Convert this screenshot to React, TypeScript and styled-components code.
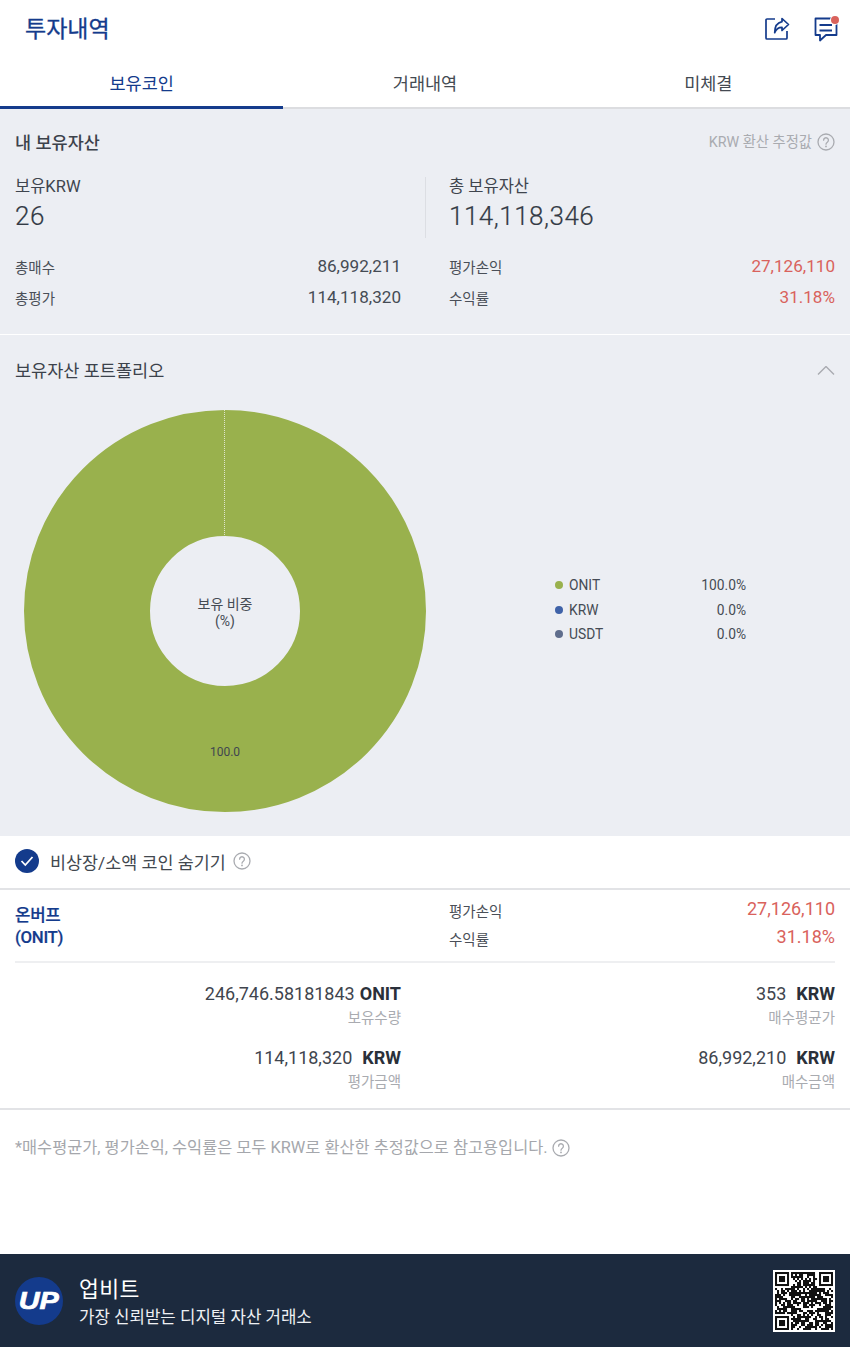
import React from 'react';
import styled, { createGlobalStyle } from 'styled-components';

const NAVY = '#143b8c';
const RED = '#d9625c';
const GRAY_BG = '#eceef3';
const TEXT = '#333a45';

const GlobalStyle = createGlobalStyle`
  html, body {
    margin: 0;
    padding: 0;
    background: #fff;
    font-family: Roboto, "Noto Sans CJK KR", sans-serif;
    color: ${TEXT};
  }
  * { box-sizing: border-box; }
`;

const Page = styled.div`
  width: 850px;
  height: 1347px;
  display: flex;
  flex-direction: column;
  background: #fff;
`;

const Header = styled.header`
  height: 60px;
  padding: 0 12px 2px 25px;
  display: flex;
  align-items: center;
  justify-content: space-between;
`;

const Title = styled.h1`
  margin: 2px 0 0;
  font-size: 23px;
  line-height: 30px;
  font-weight: 400;
  color: ${NAVY};
  -webkit-text-stroke: 0.3px ${NAVY};
`;

const HeaderIcons = styled.div`
  display: flex;
  align-items: center;
  gap: 25px;
`;

const IconWrap = styled.span`
  position: relative;
  display: block;
  width: 24px;
  height: 24px;
`;

const Dot = styled.span`
  position: absolute;
  top: -1px;
  left: 17px;
  width: 8px;
  height: 8px;
  border-radius: 50%;
  background: ${RED};
  box-shadow: 0 0 0 1px #fff;
`;

const Tabs = styled.nav`
  height: 49px;
  display: grid;
  grid-template-columns: repeat(3, 1fr);
  border-bottom: 2px solid #dcdde0;
`;

const Tab = styled.div<{ $active?: boolean }>`
  display: flex;
  align-items: center;
  justify-content: center;
  height: 49px;
  font-size: 17.5px;
  color: ${p => (p.$active ? NAVY : '#444a52')};
  border-bottom: ${p => (p.$active ? `3px solid ${NAVY}` : 'none')};
  padding-bottom: ${p => (p.$active ? '2px' : '5px')};
`;

const Summary = styled.section`
  height: 226px;
  padding: 22px 15px 0;
  background: ${GRAY_BG};
  border-bottom: 1px solid #fff;
`;

const SummaryHead = styled.div`
  display: flex;
  align-items: center;
  justify-content: space-between;
  height: 24px;
`;

const SectionTitle = styled.h2<{ $bold?: boolean }>`
  margin: 0;
  font-size: 17.5px;
  line-height: 24px;
  font-weight: ${p => (p.$bold ? 500 : 400)};
  color: #3c424b;
`;

const Estimate = styled.span`
  display: flex;
  align-items: center;
  gap: 5px;
  margin-bottom: 2px;
  font-size: 14.3px;
  line-height: 20px;
  color: #a9abb0;
`;

const TotalsGrid = styled.div`
  display: grid;
  grid-template-columns: 386px 386px;
  column-gap: 48px;
  margin-top: 22px;
`;

const TotalCell = styled.div<{ $divided?: boolean }>`
  position: relative;
  height: 61px;
  ${p =>
    p.$divided &&
    `&::before {
      content: '';
      position: absolute;
      left: -24px;
      top: 0;
      bottom: 0;
      width: 1px;
      background: #dcdee3;
    }`}
`;

const TotalLabel = styled.div`
  font-size: 16.5px;
  line-height: 20px;
  color: #3f454e;
`;

const TotalValue = styled.div`
  margin-top: 3px;
  font-size: 26px;
  line-height: 32px;
  letter-spacing: 0.5px;
  font-weight: 300;
  -webkit-text-stroke: 0.2px ${TEXT};
  color: ${TEXT};
`;

const StatList = styled.div`
  display: flex;
  flex-direction: column;
  gap: 7px;
  margin-top: 16px;
`;

const StatRow = styled.div`
  display: flex;
  align-items: center;
  justify-content: space-between;
  height: 24px;
`;

const StatLabel = styled.span`
  font-size: 14.5px;
  color: #4a4f58;
`;

const StatValue = styled.span<{ $up?: boolean }>`
  font-size: 17.1px;
  color: ${p => (p.$up ? RED : '#454b54')};
`;

const Portfolio = styled.section`
  height: 501px;
  padding: 24px 15px 0;
  background: ${GRAY_BG};
`;

const PortfolioHead = styled.div`
  display: flex;
  align-items: center;
  justify-content: space-between;
`;

const ChartRow = styled.div`
  display: flex;
  align-items: flex-start;
  margin-top: 26px;
  padding-left: 9px;
`;

const DonutSvg = styled.svg`
  display: block;
  flex: none;
`;

const Legend = styled.ul`
  list-style: none;
  margin: 164px 0 0 129px;
  padding: 0;
  width: 191px;
`;

const LegendItem = styled.li`
  display: flex;
  align-items: center;
  height: 24.5px;
  font-size: 13.8px;
  color: #454b54;
`;

const LegendDot = styled.span<{ $color: string }>`
  width: 8px;
  height: 8px;
  margin-right: 6px;
  border-radius: 50%;
  background: ${p => p.$color};
`;

const LegendValue = styled.span`
  margin-left: auto;
`;

const HideRow = styled.div`
  height: 54px;
  padding: 0 15px 2px;
  display: flex;
  align-items: center;
  border-bottom: 2px solid #e2e3e6;
  font-size: 17.4px;
  color: #42484f;
`;

const HideText = styled.span`
  margin: 0 7px 0 11px;
`;

const Check = styled.span`
  width: 24px;
  height: 24px;
  border-radius: 50%;
  background: ${NAVY};
  display: flex;
  align-items: center;
  justify-content: center;
`;

const CoinCard = styled.section`
  padding: 0 15px;
  height: 220px;
  border-bottom: 2px solid #e2e3e6;
`;

const CoinTop = styled.div`
  display: grid;
  grid-template-columns: 386px 386px;
  column-gap: 48px;
  height: 73px;
  border-bottom: 2px solid #eeeff1;
`;

const CoinName = styled.div`
  padding-top: 15px;
  font-size: 16.8px;
  line-height: 21.5px;
  font-weight: 500;
  letter-spacing: -0.3px;
  color: ${NAVY};
  -webkit-text-stroke: 0.2px ${NAVY};
`;

const CoinStats = styled.div`
  padding-top: 6px;
`;

const CoinStatRow = styled.div`
  display: flex;
  align-items: center;
  justify-content: space-between;
  height: 28px;
`;

const CoinStatValue = styled.span`
  font-size: 18px;
  margin-top: -4px;
  color: ${RED};
`;

const AmountGrid = styled.div`
  display: grid;
  grid-template-columns: 386px 386px;
  column-gap: 48px;
  row-gap: 15px;
  padding-top: 19px;
`;

const Amount = styled.div`
  text-align: right;
`;

const AmountValue = styled.div`
  font-size: 18px;
  line-height: 24px;
  color: #3f454e;
`;

const Unit = styled.b<{ $wide?: boolean }>`
  font-weight: 700;
  color: #2a303a;
  margin-left: ${p => (p.$wide ? '10px' : '5px')};
`;

const AmountLabel = styled.div`
  margin-top: 1px;
  font-size: 14.5px;
  line-height: 24px;
  color: #a9abb0;
`;

const Note = styled.p`
  margin: 26px 0 0;
  padding: 0 15px;
  display: flex;
  align-items: center;
  gap: 4px;
  font-size: 16.36px;
  line-height: 24px;
  color: #a5a7ac;
`;

const Footer = styled.footer`
  margin-top: auto;
  height: 93px;
  padding: 0 15px;
  display: flex;
  align-items: center;
  background: #1c2a3e;
  color: #fff;
`;

const Logo = styled.div`
  width: 48px;
  height: 48px;
  flex: none;
  border-radius: 50%;
  background: ${NAVY};
  display: flex;
  align-items: center;
  justify-content: center;
`;

const LogoText = styled.span`
  display: block;
  font: italic 700 24px/1 "Liberation Sans", sans-serif;
  color: #fff;
  -webkit-text-stroke: 0.7px #fff;
  transform: scaleX(1.2);
`;

const Brand = styled.div`
  margin-left: 16px;
  padding-top: 4px;
`;

const BrandName = styled.div`
  font-size: 21.6px;
  line-height: 30px;
  letter-spacing: 0.4px;
`;

const BrandSlogan = styled.div`
  font-size: 16.8px;
  line-height: 25px;
  color: #eef0f3;
`;

const QrBox = styled.div`
  margin-left: auto;
  width: 62px;
  height: 62px;
  flex: none;
  background: #fff;
  padding: 2px;
`;

function Help({ size = 18, color = '#a9abb0' }: { size?: number; color?: string }) {
  return (
    <svg width={size} height={size} viewBox="0 0 18 18" fill="none">
      <circle cx="9" cy="9" r="8" stroke={color} strokeWidth="1.3" />
      <path d="M6.6 7.2a2.4 2.4 0 1 1 3.7 2c-.9.6-1.3 1-1.3 2" stroke={color} strokeWidth="1.3" strokeLinecap="round" />
      <circle cx="9" cy="13.4" r=".9" fill={color} />
    </svg>
  );
}

function ShareIcon() {
  return (
    <svg width="24" height="24" viewBox="0 0 24 24" fill="none" stroke={NAVY} strokeWidth="1.7" style={{ display: 'block', overflow: 'visible' }}>
      <path d="M10 2H2a1 1 0 0 0-1 1v18a1 1 0 0 0 1 1h19a1 1 0 0 0 1-1v-7" />
      <path d="M17 1.5 23.5 7.5 17 13.5v-3.2c-3.6 0-6 1.8-7.3 5.4 0-5.8 2.6-10 7.3-11z" strokeLinejoin="round" />
    </svg>
  );
}

function ChatIcon() {
  return (
    <svg width="24" height="24" viewBox="0 0 24 24" fill="none" stroke={NAVY} strokeWidth="1.8" style={{ display: 'block', overflow: 'visible' }}>
      <path d="M1.5 1.5H22.5V18H12L6 23.5V18H1.5z" strokeLinejoin="round" />
      <path d="M5.5 8H18M5.5 13.5H18" />
    </svg>
  );
}

// 29 x 29 module code: fixed finder squares, the rest filled from a small hash
const QR_SIZE = 29;

function isFinder(x: number, y: number) {
  const inBox = (ox: number, oy: number) => x >= ox && x < ox + 7 && y >= oy && y < oy + 7;
  return inBox(0, 0) || inBox(22, 0) || inBox(0, 22);
}

function finderOn(x: number, y: number) {
  const lx = x >= 22 ? x - 22 : x;
  const ly = y >= 22 ? y - 22 : y;
  const ring = lx === 0 || lx === 6 || ly === 0 || ly === 6;
  const core = lx >= 2 && lx <= 4 && ly >= 2 && ly <= 4;
  return ring || core;
}

function inQuiet(x: number, y: number) {
  return (x < 8 && y < 8) || (x > 20 && y < 8) || (x < 8 && y > 20);
}

function moduleOn(x: number, y: number) {
  const h = (x * 73 + y * 151 + x * y * 17 + (x ^ y) * 29) % 97;
  return h % 5 < 3 || (x + y * 3) % 11 === 0;
}

function QrCode() {
  const cells: React.ReactElement[] = [];
  for (let y = 0; y < QR_SIZE; y++) {
    for (let x = 0; x < QR_SIZE; x++) {
      const on = isFinder(x, y) ? finderOn(x, y) : !inQuiet(x, y) && moduleOn(x, y);
      if (on) cells.push(<rect key={`${x}-${y}`} x={x} y={y} width="1.02" height="1.02" />);
    }
  }
  return (
    <svg width="58" height="58" viewBox={`0 0 ${QR_SIZE} ${QR_SIZE}`} fill="#111" style={{ display: 'block' }}>
      {cells}
    </svg>
  );
}

const legend = [
  { name: 'ONIT', color: '#99b14d', value: '100.0%' },
  { name: 'KRW', color: '#3f62a8', value: '0.0%' },
  { name: 'USDT', color: '#5f6d8c', value: '0.0%' }
];

function App() {
  return (
    <Page>
      <GlobalStyle />
      <Header>
        <Title>투자내역</Title>
        <HeaderIcons>
          <IconWrap>
            <ShareIcon />
          </IconWrap>
          <IconWrap>
            <ChatIcon />
            <Dot />
          </IconWrap>
        </HeaderIcons>
      </Header>
      <Tabs>
        <Tab $active>보유코인</Tab>
        <Tab>거래내역</Tab>
        <Tab>미체결</Tab>
      </Tabs>

      <Summary>
        <SummaryHead>
          <SectionTitle $bold>내 보유자산</SectionTitle>
          <Estimate>
            KRW 환산 추정값 <Help />
          </Estimate>
        </SummaryHead>
        <TotalsGrid>
          <TotalCell>
            <TotalLabel>보유KRW</TotalLabel>
            <TotalValue>26</TotalValue>
          </TotalCell>
          <TotalCell $divided>
            <TotalLabel>총 보유자산</TotalLabel>
            <TotalValue>114,118,346</TotalValue>
          </TotalCell>
          <StatList>
            <StatRow>
              <StatLabel>총매수</StatLabel>
              <StatValue>86,992,211</StatValue>
            </StatRow>
            <StatRow>
              <StatLabel>총평가</StatLabel>
              <StatValue>114,118,320</StatValue>
            </StatRow>
          </StatList>
          <StatList>
            <StatRow>
              <StatLabel>평가손익</StatLabel>
              <StatValue $up>27,126,110</StatValue>
            </StatRow>
            <StatRow>
              <StatLabel>수익률</StatLabel>
              <StatValue $up>31.18%</StatValue>
            </StatRow>
          </StatList>
        </TotalsGrid>
      </Summary>

      <Portfolio>
        <PortfolioHead>
          <SectionTitle>보유자산 포트폴리오</SectionTitle>
          <svg width="18" height="10" viewBox="0 0 18 10" fill="none" stroke="#a9abb0" strokeWidth="1.4">
            <path d="M1 8.5 9 .5l8 8" />
          </svg>
        </PortfolioHead>
        <ChartRow>
          <DonutSvg width="402" height="404" viewBox="0 0 402 404">
            <circle cx="201" cy="202" r="138" fill="none" stroke="#99b14d" strokeWidth="126" />
            <line x1="200.5" y1="1" x2="200.5" y2="126" stroke="#dfe4cc" strokeWidth="1" strokeDasharray="1 1" />
            <text x="201" y="200" textAnchor="middle" fontSize="14" fill="#454b54">
              보유 비중
            </text>
            <text x="201" y="217" textAnchor="middle" fontSize="14" fill="#454b54">
              (%)
            </text>
            <text x="201" y="347" textAnchor="middle" fontSize="12" fill="#3f4650">
              100.0
            </text>
          </DonutSvg>
          <Legend>
            {legend.map(item => (
              <LegendItem key={item.name}>
                <LegendDot $color={item.color} />
                {item.name}
                <LegendValue>{item.value}</LegendValue>
              </LegendItem>
            ))}
          </Legend>
        </ChartRow>
      </Portfolio>

      <HideRow>
        <Check>
          <svg width="14" height="12" viewBox="0 0 14 12" fill="none" stroke="#fff" strokeWidth="1.8">
            <path d="M1.5 6 5.3 10 12.5 2" />
          </svg>
        </Check>
        <HideText>비상장/소액 코인 숨기기</HideText>
        <Help />
      </HideRow>

      <CoinCard>
        <CoinTop>
          <CoinName>
            온버프
            <br />
            (ONIT)
          </CoinName>
          <CoinStats>
            <CoinStatRow>
              <StatLabel>평가손익</StatLabel>
              <CoinStatValue>27,126,110</CoinStatValue>
            </CoinStatRow>
            <CoinStatRow>
              <StatLabel>수익률</StatLabel>
              <CoinStatValue>31.18%</CoinStatValue>
            </CoinStatRow>
          </CoinStats>
        </CoinTop>
        <AmountGrid>
          <Amount>
            <AmountValue>
              246,746.58181843<Unit>ONIT</Unit>
            </AmountValue>
            <AmountLabel>보유수량</AmountLabel>
          </Amount>
          <Amount>
            <AmountValue>
              353<Unit $wide>KRW</Unit>
            </AmountValue>
            <AmountLabel>매수평균가</AmountLabel>
          </Amount>
          <Amount>
            <AmountValue>
              114,118,320<Unit $wide>KRW</Unit>
            </AmountValue>
            <AmountLabel>평가금액</AmountLabel>
          </Amount>
          <Amount>
            <AmountValue>
              86,992,210<Unit $wide>KRW</Unit>
            </AmountValue>
            <AmountLabel>매수금액</AmountLabel>
          </Amount>
        </AmountGrid>
      </CoinCard>

      <Note>
        *매수평균가, 평가손익, 수익률은 모두 KRW로 환산한 추정값으로 참고용입니다. <Help />
      </Note>

      <Footer>
        <Logo>
          <LogoText>UP</LogoText>
        </Logo>
        <Brand>
          <BrandName>업비트</BrandName>
          <BrandSlogan>가장 신뢰받는 디지털 자산 거래소</BrandSlogan>
        </Brand>
        <QrBox>
          <QrCode />
        </QrBox>
      </Footer>
    </Page>
  );
}

export default App;
